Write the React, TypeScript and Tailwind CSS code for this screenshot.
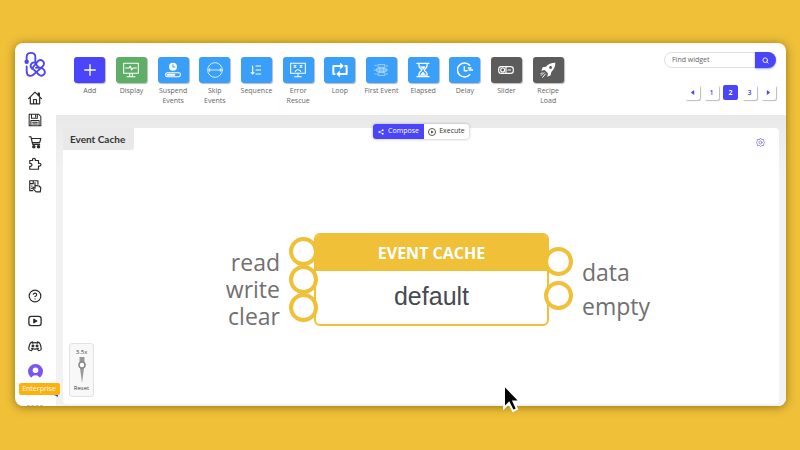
import React from "react";
import { LuPlus, LuSearch, LuCircleHelp } from "react-icons/lu";

const stroke = {
    fill: "none",
    stroke: "currentColor",
    strokeLinecap: "round" as const,
    strokeLinejoin: "round" as const,
};

const Logo: React.FC = () => (
    <svg viewBox="0 0 66 80" className="w-[22px] h-[27px] text-[#4b45f5]" {...stroke} strokeWidth="5.500">
        <path d="M8 32V17C8 1 34 1 34 17V32C34 38 38 44 44 49" />
        <path d="M8 46V60C8 76 22 78 31 68L56 46C68 32 50 20 40 32L24 52" />
        <path d="M34 34C20 32 14 48 28 54L44 70C56 80 70 64 58 54C52 49 44 48 36 50" />
        <circle cx="8" cy="32" r="4" fill="currentColor" />
    </svg>
);

const HomeIcon = () => (
    <svg viewBox="0 0 24 24" className="w-[14px] h-[14px]" {...stroke} strokeWidth="2">
        <path d="M1 13L12 2L23 13M4 10.500V22H20V10.500M17.500 7V3.500H19.500V9M9.500 22V14.500H14.500V22" />
    </svg>
);

const SaveIcon = () => (
    <svg viewBox="0 0 24 24" className="w-[14px] h-[14px]" {...stroke} strokeWidth="1.800">
        <path d="M2 2H18L22 6V22H2ZM6 2V9H16V2M13 4V7M5 22V13H19V22M8 16H16M8 19H16" />
    </svg>
);

const CartIcon = () => (
    <svg viewBox="0 0 24 24" className="w-[14px] h-[14px]" {...stroke} strokeWidth="2">
        <path d="M2 3H5L8 16H20M6 6H22L20 13H7.500" />
        <circle cx="10" cy="20" r="2" fill="currentColor" />
        <circle cx="18" cy="20" r="2" fill="currentColor" />
    </svg>
);

const PuzzleIcon = () => (
    <svg viewBox="0 0 24 24" className="w-[14px] h-[14px]" {...stroke} strokeWidth="2">
        <path d="M3 6H8C6 1 14 1 12.500 6H18V11C23 9 24 17 18 15.500V21H3V16C8 17 8 10 3 11Z" />
    </svg>
);

const DocsIcon = () => (
    <svg viewBox="0 0 24 24" className="w-[14px] h-[14px]" {...stroke} strokeWidth="2">
        <path d="M8 20H3V3H17V9M3 8H8M9 3V8M6 12H7M6 16H7" />
        <path d="M12 6V16L9 14L8 16L14 22H21L22 15L19 12L12 11" />
    </svg>
);

const VideoIcon = () => (
    <svg viewBox="0 0 24 24" className="w-[14px] h-[14px]" {...stroke} strokeWidth="2.200">
        <rect x="1.500" y="4" width="21" height="16" rx="4" />
        <path d="M10 9L15 12L10 15Z" fill="currentColor" />
    </svg>
);

const DiscordIcon = () => (
    <svg viewBox="0 0 24 24" className="w-[14px] h-[14px]" {...stroke} strokeWidth="2">
        <path d="M8 5C5 5 4 6 3 9C2 12 1 15 1.500 18C3 20 5 20 6 20L8 17M16 5C19 5 20 6 21 9C22 12 23 15 22.500 18C21 20 19 20 18 20L16 17M7 7C10 6 14 6 17 7M6 16C10 18 14 18 18 16" />
        <circle cx="8.500" cy="12" r="1.500" fill="currentColor" />
        <circle cx="15.500" cy="12" r="1.500" fill="currentColor" />
    </svg>
);

const AvatarIcon = () => (
    <svg viewBox="0 0 24 24" className="w-[15px] h-[15px]">
        <circle cx="12" cy="12" r="12" fill="#7a55f0" />
        <circle cx="12" cy="10" r="4.500" fill="#fff" />
        <path d="M5 24C5 16 19 16 19 24Z" fill="#fff" />
    </svg>
);

const DisplayIcon = () => (
    <svg viewBox="0 0 24 24" className="w-4 h-4" {...stroke} strokeWidth="1.600">
        <path d="M1 2H23V17H1ZM10 17V21M14 17V21M6 22H18M4 9H9L11 6L13 12L15 9H20" />
    </svg>
);

const SuspendIcon = () => (
    <svg viewBox="0 0 24 24" className="w-4 h-4" {...stroke} strokeWidth="1.600">
        <circle cx="12" cy="7" r="6" fill="currentColor" stroke="none" />
        <path d="M12 4V7.500H15" stroke="#3a9ff8" />
        <rect x="1" y="16" width="22" height="6" rx="2.500" />
        <path d="M4 19H14" strokeWidth="3" />
    </svg>
);

const SkipIcon = () => (
    <svg viewBox="0 0 24 24" className="w-4 h-4" {...stroke} strokeWidth="1.200">
        <circle cx="12" cy="12" r="11" />
        <path d="M2 12H22M4 10V14M20 10V14" />
    </svg>
);

const SequenceIcon = () => (
    <svg viewBox="0 0 24 24" className="w-4 h-4" {...stroke} strokeWidth="1.700">
        <path d="M7 6V18M5 16L7 18L9 16M12 6H19M12 12H19M12 18H19" />
    </svg>
);

const ErrorIcon = () => (
    <svg viewBox="0 0 24 24" className="w-4 h-4" {...stroke} strokeWidth="1.600">
        <path d="M1 2H23V17H1ZM12 17V21M7 22H17M6 5L9 8M9 5L6 8M15 5L18 8M18 5L15 8M8 14C10 11 14 11 16 14" />
    </svg>
);

const LoopIcon = () => (
    <svg viewBox="0 0 24 24" className="w-4 h-4" {...stroke} strokeWidth="3">
        <path d="M4 18H2V6H14M20 6H22V18H10" />
        <path d="M13 2L17 6L13 10ZM11 14L7 18L11 22Z" fill="currentColor" strokeWidth="1" />
    </svg>
);

const FirstEventIcon = () => (
    <svg viewBox="0 0 24 24" className="w-4 h-4 opacity-60" {...stroke} strokeWidth="1.300">
        <path d="M8 4H18V8H8ZM8 16H18V20H8ZM3 5H5M2 12H22M3 18H5M10 8V16M16 8V16M20 6H22M20 18H22M6 10H20V14H6Z" />
    </svg>
);

const ElapsedIcon = () => (
    <svg viewBox="0 0 24 24" className="w-4 h-4" {...stroke} strokeWidth="2">
        <path d="M3 2H21M3 22H21M6 2V6C6 9 10 10 10 12C10 14 6 15 6 18V22M18 2V6C18 9 14 10 14 12C14 14 18 15 18 18V22" />
        <path d="M9 7H15L12 11ZM8 20L12 15L16 20Z" fill="currentColor" strokeWidth="1" />
    </svg>
);

const DelayIcon = () => (
    <svg viewBox="0 0 24 24" className="w-4 h-4" {...stroke} strokeWidth="2.200">
        <path d="M19 5A10.500 10.500 0 1 0 19 19M11 7V13H15M17 9H21M18 12H24" />
    </svg>
);

const SliderIcon = () => (
    <svg viewBox="0 0 24 24" className="w-4 h-4" {...stroke} strokeWidth="1.700">
        <rect x="1" y="7" width="22" height="10" rx="4" />
        <circle cx="7" cy="12" r="3" />
        <path d="M12 7V17M15 12H19" />
    </svg>
);

const RocketIcon = () => (
    <svg viewBox="0 0 24 24" className="w-4 h-4" {...stroke} strokeWidth="1.500">
        <path
            d="M23 1C17 1 12 3 9 7L4 8L2 13L7 12L12 17L11 22L16 20L17 15C21 11 23 7 23 1ZM16 6A2.200 2.200 0 1 1 15.900 10.400A2.200 2.200 0 1 1 16 6Z"
            fill="currentColor"
            fillRule="evenodd"
            stroke="none"
        />
        <path d="M6 16L2 20M8 18L4 23M3 16L1 18" />
    </svg>
);

const PlusIcon = () => <LuPlus className="w-[18px] h-[18px]" strokeWidth={1.8} />;

const widgets = [
    { label: "Add", color: "bg-[#4b45fa]", Icon: PlusIcon },
    { label: "Display", color: "bg-[#5fae68]", Icon: DisplayIcon },
    { label: "Suspend\nEvents", color: "bg-[#3a9ff8]", Icon: SuspendIcon },
    { label: "Skip\nEvents", color: "bg-[#3a9ff8]", Icon: SkipIcon },
    { label: "Sequence", color: "bg-[#3a9ff8]", Icon: SequenceIcon },
    { label: "Error\nRescue", color: "bg-[#3a9ff8]", Icon: ErrorIcon },
    { label: "Loop", color: "bg-[#3a9ff8]", Icon: LoopIcon },
    { label: "First Event", color: "bg-[#3a9ff8]", Icon: FirstEventIcon },
    { label: "Elapsed", color: "bg-[#3a9ff8]", Icon: ElapsedIcon },
    { label: "Delay", color: "bg-[#3a9ff8]", Icon: DelayIcon },
    { label: "Slider", color: "bg-[#5c5c5c]", Icon: SliderIcon },
    { label: "Recipe\nLoad", color: "bg-[#5c5c5c]", Icon: RocketIcon },
];

const topLinks = [
    { label: "Home", Icon: HomeIcon },
    { label: "Save", Icon: SaveIcon },
    { label: "Store", Icon: CartIcon },
    { label: "Plugins", Icon: PuzzleIcon },
    { label: "Docs", Icon: DocsIcon },
];

const Sidebar: React.FC = () => (
    <nav className="w-[41px] shrink-0 flex flex-col items-center pr-px text-[#2a2a2a]">
        <a href="#" aria-label="Main page" className="mt-2">
            <Logo />
        </a>
        <div className="mt-[13px] flex flex-col gap-2">
            {topLinks.map(({ label, Icon }) => (
                <a key={label} href="#" aria-label={label}>
                    <Icon />
                </a>
            ))}
        </div>
        <div className="mt-auto flex flex-col items-center gap-[11px]">
            <a href="#" aria-label="Help">
                <LuCircleHelp className="w-[14px] h-[14px]" strokeWidth={2} />
            </a>
            <a href="#" aria-label="Videos">
                <VideoIcon />
            </a>
            <a href="#" aria-label="Discord">
                <DiscordIcon />
            </a>
            <a href="#" aria-label="Account">
                <AvatarIcon />
            </a>
        </div>
        <div className="relative z-10 mt-1 ml-2 h-3 w-[41px] rounded-[2px] bg-[#fdb10d] text-center text-[7px] leading-3 text-white">
            Enterprise
            <span className="absolute right-[2px] top-full border-t-2 border-l-4 border-t-[#2456b8] border-l-transparent" />
        </div>
        <div className="mt-[10px] w-4 border-t border-dashed border-[#c9c59d]" />
    </nav>
);

const Pager: React.FC = () => (
    <div className="flex gap-1">
        {["◀", "1", "2", "3", "▶"].map((page) => (
            <button
                key={page}
                className={
                    page === "2"
                        ? "w-[15px] h-[15px] rounded-[2px] bg-[#4b45fa] text-white text-[7px] font-bold leading-none"
                        : "w-[15px] h-[15px] rounded-[2px] bg-white text-[#4b45fa] text-[7px] font-semibold leading-none shadow-[1px_1px_1px_#bbb]"
                }
            >
                {page === "◀" || page === "▶" ? (
                    <svg viewBox="0 0 6 6" className="mx-auto w-[5px] h-[5px]" fill="currentColor">
                        <path d={page === "◀" ? "M5 0V6L1 3Z" : "M1 0V6L5 3Z"} />
                    </svg>
                ) : (
                    page
                )}
            </button>
        ))}
    </div>
);

const Toolbar: React.FC = () => (
    <header className="flex h-[72px] shrink-0 justify-between pl-[13px] pr-[10px]">
        <div className="grid w-[500px] grid-cols-12 pt-[14px]">
            {widgets.map(({ label, color, Icon }) => (
                <button key={label} className="flex flex-col items-center text-[7px] leading-[10px] text-[#666]">
                    <span
                        className={`flex h-[26px] w-[31px] items-center justify-center rounded-[3px] text-white shadow-[1px_1px_1px_#bbb] ${color}`}
                    >
                        <Icon />
                    </span>
                    <span className="mt-[3px] whitespace-pre">{label}</span>
                </button>
            ))}
        </div>
        <div className="flex flex-col items-end pt-[9px]">
            <form className="flex h-4 w-[112px] rounded-full border border-[#dedee4]">
                <input
                    type="search"
                    aria-label="Find widget"
                    placeholder="Find widget"
                    className="min-w-0 flex-1 pl-[7px] text-[7px] placeholder:text-[#666]"
                />
                <button
                    type="button"
                    aria-label="Search"
                    className="-my-px -mr-px flex w-[21px] items-center justify-center rounded-r-full bg-[#4b45fa] text-white shadow-[0_1px_2px_#a9a6f5]"
                >
                    <LuSearch className="w-[7px] h-[7px]" strokeWidth={3} />
                </button>
            </form>
            <div className="mt-[17px]">
                <Pager />
            </div>
        </div>
    </header>
);

const ModeSwitch: React.FC = () => (
    <div className="absolute left-[310px] -top-1 flex h-[15px] rounded-[3px] bg-white text-[7px] shadow-[0_0_3px_#aaa]">
        <button className="flex w-[51px] items-center justify-center gap-1 rounded-l-[3px] bg-[#4b45fa] text-white">
            <svg viewBox="0 0 10 10" className="w-[6px] h-[6px]" fill="currentColor" stroke="currentColor">
                <path d="M2 5L8 2M2 5L8 8" />
                <circle cx="2" cy="5" r="1" />
                <circle cx="8" cy="2" r="1" />
                <circle cx="8" cy="8" r="1" />
            </svg>
            Compose
        </button>
        <button className="flex w-[45px] items-center justify-center gap-[3px] text-[#333]">
            <svg viewBox="0 0 10 10" className="w-[8px] h-[8px]" fill="none" stroke="currentColor">
                <circle cx="5" cy="5" r="4.400" />
                <path d="M4 3L7 5L4 7Z" fill="currentColor" stroke="none" />
            </svg>
            Execute
        </button>
    </div>
);

const Port: React.FC<{ className: string }> = ({ className }) => (
    <span className={`absolute h-[29px] w-[29px] rounded-full border-4 border-[#efc038] bg-white ${className}`} />
);

const EventCacheNode: React.FC = () => (
    <div className="absolute left-[251px] top-[105px] w-[235px] text-[23px] leading-[27px] text-[#707070]">
        <div className="h-[93px] overflow-hidden rounded-[6px] border-2 border-[#efc038] bg-white text-center">
            <div className="h-9 bg-[#efc038] text-[16px] font-bold leading-9 text-white">EVENT CACHE</div>
            <div className="pt-[11px] font-['Liberation_Sans',Arial,sans-serif] text-[25px] leading-7 text-[#454a52]">default</div>
        </div>
        <Port className="-left-[25px] top-1" />
        <Port className="-left-[25px] top-8" />
        <Port className="-left-[25px] top-[60px]" />
        <Port className="-right-[24px] top-[14px]" />
        <Port className="-right-[24px] top-12" />
        <div className="absolute right-[269px] top-4 text-right">
            <p>read</p>
            <p>write</p>
            <p>clear</p>
        </div>
        <div className="absolute left-[268px] top-[22px] leading-[34px]">
            <p>data</p>
            <p>empty</p>
        </div>
    </div>
);

const ZoomControl: React.FC = () => (
    <div className="absolute bottom-[7px] left-[6px] flex w-[25px] flex-col items-center rounded-[3px] border border-[#e2e2e2] bg-[#f8f8f8] py-1 text-[6px] leading-[8px] text-[#444]">
        <span>3.5x</span>
        <svg viewBox="0 0 10 26" className="my-px h-[26px] w-[10px]">
            <path d="M2.500 0H7.500V5H2.500ZM3 11H7L5 26Z" fill="#999" />
            <circle cx="5" cy="8" r="3" fill="#fff" stroke="#888" strokeWidth="1.500" />
        </svg>
        <button>Reset</button>
    </div>
);

const Cursor: React.FC = () => (
    <svg viewBox="0 0 20 30" className="absolute left-[439px] top-[255px] z-20 h-[30px] w-5">
        <path d="M2 2V25L7 20L11 28L15 26L11.500 18.500H18Z" fill="#000" stroke="#fff" strokeWidth="2" />
    </svg>
);

const App: React.FC = () => {
    return (
        <div className="flex min-h-screen bg-[#efc038] pt-[43px] pr-[14px] pb-[44px] pl-[15px] font-['Open_Sans','Noto_Sans',sans-serif]">
            <div className="flex flex-1 rounded-[8px] bg-white shadow-[0_1px_10px_rgba(90,60,0,0.6)]">
                <Sidebar />
                <div className="flex min-w-0 flex-1 flex-col">
                    <Toolbar />
                    <main className="flex flex-1 rounded-br-[8px] bg-linear-to-b from-[#e9e9e9] to-[#f2f2f2] to-20% pt-[13px] pr-[7px] pb-[2px] pl-[7px]">
                        <section className="relative flex-1 rounded-[4px] bg-white">
                            <h1 className="w-[71px] rounded-br-[3px] bg-[#e9e9e9] pl-[7px] font-[Lato,sans-serif] text-[10px] font-bold leading-[22px] text-[#333]">
                                Event Cache
                            </h1>
                            <ModeSwitch />
                            <button aria-label="Settings" className="absolute right-[14px] top-[10px] text-[#7670d8]">
                                <svg viewBox="0 0 24 24" className="h-[9px] w-[9px]" {...stroke} strokeWidth="2">
                                    <path d="M12 1L15 4L20 4L21 9L23 12L21 15L20 20L15 20L12 23L9 20L4 20L3 15L1 12L3 9L4 4L9 4Z" />
                                    <circle cx="12" cy="12" r="4" />
                                </svg>
                            </button>
                            <EventCacheNode />
                            <ZoomControl />
                            <Cursor />
                        </section>
                    </main>
                </div>
            </div>
        </div>
    );
};

export default App;
